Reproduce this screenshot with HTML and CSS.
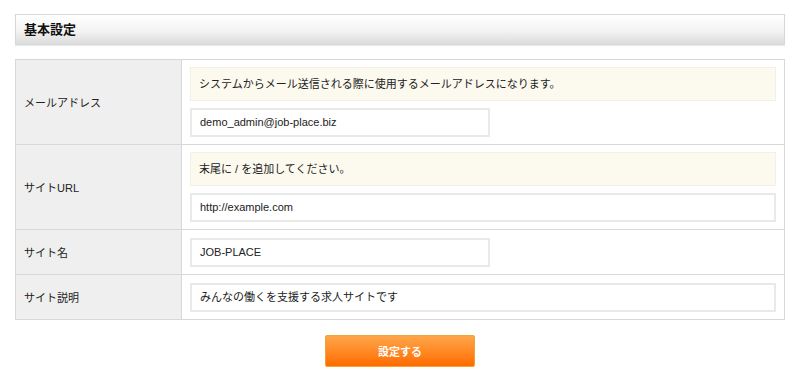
FILE: index.html
```html
<!DOCTYPE html>
<html lang="ja">
<head>
<meta charset="utf-8">
<link rel="stylesheet" href="styles.css">
</head>
<body>
<div class="page">
  <h2 class="heading">基本設定</h2>
  <table class="form">
    <tr class="row-tall">
      <th>メールアドレス</th>
      <td>
        <div class="notice">システムからメール送信される際に使用するメールアドレスになります。</div>
        <div class="input half">demo_admin@job-place.biz</div>
      </td>
    </tr>
    <tr class="row-tall">
      <th>サイトURL</th>
      <td>
        <div class="notice">末尾に / を追加してください。</div>
        <div class="input full">http://example.com</div>
      </td>
    </tr>
    <tr>
      <th>サイト名</th>
      <td><div class="input half">JOB-PLACE</div></td>
    </tr>
    <tr>
      <th>サイト説明</th>
      <td><div class="input full">みんなの働くを支援する求人サイトです</div></td>
    </tr>
  </table>
  <div class="actions"><button class="submit">設定する</button></div>
</div>
</body>
</html>
```
FILE: styles.css
```css
* { box-sizing: border-box; }
body {
  margin: 0;
  background: #fff;
  font-family: "Liberation Sans", Arial, "Noto Sans CJK JP", sans-serif;
  font-size: 11px;
  color: #222;
}
.page {
  padding: 14px 15px 0 15px;
  width: 800px;
}
.heading {
  margin: 0;
  height: 31px;
  border: 1px solid #d8d8d8;
  background: linear-gradient(#ffffff 0%, #f3f3f3 55%, #dcdcdc 100%);
  font-size: 13px;
  font-weight: bold;
  color: #111;
  padding: 0 8px;
  line-height: 29px;
  box-shadow: 0 1px 1px rgba(0,0,0,0.08);
}
.form {
  margin-top: 14px;
  width: 770px;
  border-collapse: collapse;
  border: 1px solid #d8d8d8;
}
.form th, .form td {
  border: 1px solid #d8d8d8;
  padding: 7px 8px;
  vertical-align: middle;
}
.form th {
  width: 166px;
  background: #efefef;
  text-align: left;
  font-weight: normal;
  color: #222;
}
.form td { background: #fff; height: 45px; }
.row-tall td { height: 85px; }
.notice {
  background: #fcf9ef;
  border: 1px solid #f3efe2;
  height: 34px;
  line-height: 32px;
  padding: 0 8px;
  margin-bottom: 7px;
}
.input {
  height: 29px;
  border: 2px solid #e9e9e9;
  line-height: 25px;
  padding: 0 8px;
  background: #fff;
  color: #222;
}
.half { width: 300px; }
.full { width: 100%; }
.actions {
  display: flex;
  justify-content: center;
  padding-top: 15px;
}
.submit {
  width: 150px;
  height: 32px;
  border: 1px solid #f3a23a;
  border-radius: 2px;
  background: linear-gradient(#ffa64a, #ff6c00);
  color: #fff;
  font-family: "Liberation Sans", Arial, "Noto Sans CJK JP", sans-serif;
  font-weight: bold;
  font-size: 11px;
}
```
